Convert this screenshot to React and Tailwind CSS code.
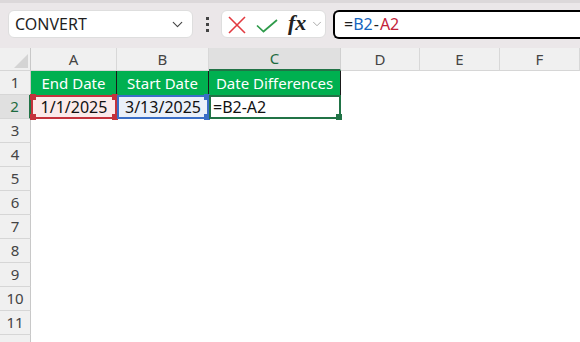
import { ChevronDown } from 'lucide-react';

const cols = [
  { key: 'A', w: 'w-[86px]' },
  { key: 'B', w: 'w-[92px]' },
  { key: 'C', w: 'w-[132px]' },
  { key: 'D', w: 'w-[79px]' },
  { key: 'E', w: 'w-[80px]' },
  { key: 'F', w: 'w-[80px]' },
];

const Handle = ({ pos, color }) => (
  <span className={`absolute w-[6px] h-[6px] ${pos} ${color}`} />
);

const Toolbar = () => (
  <div className="h-[48px] bg-[#ebe7e9] border-t-[3px] border-[#dcd8da] flex items-center pl-[8px] pt-[4px] pb-[7px]">
    <div className="w-[185px] h-[28px] bg-white border border-[#dedede] rounded-[6px] flex items-center justify-between pl-[6px] pr-[6px]">
      <span className="text-[16px] text-[#1f1f1f]">CONVERT</span>
      <ChevronDown size={17} strokeWidth={1.6} className="text-[#444]" />
    </div>
    <div className="w-[28px] flex flex-col items-center gap-[3px]">
      <span className="w-[3px] h-[3px] bg-[#444]" />
      <span className="w-[3px] h-[3px] bg-[#444]" />
      <span className="w-[3px] h-[3px] bg-[#444]" />
    </div>
    <div className="w-[105px] h-[28px] bg-white border border-[#dedede] rounded-[6px] flex items-center pl-[6px]">
      <svg width="18" height="18" viewBox="0 0 18 18" className="mt-[1px]">
        <path d="M1 1 L17 17 M17 1 L1 17" stroke="#e23a40" strokeWidth="1.6" fill="none" />
      </svg>
      <svg width="22" height="14" viewBox="0 0 22 14" className="ml-[10px] mt-[3px]">
        <path d="M1 6.5 L7.5 12.5 L21 1" stroke="#2f9b4b" strokeWidth="1.7" fill="none" />
      </svg>
      <span className="ml-[10px] text-[22px] italic font-semibold text-[#222] leading-none -mt-[2px]" style={{ fontFamily: '"Liberation Serif", serif' }}>fx</span>
      <ChevronDown size={14} strokeWidth={1.4} className="text-[#999] ml-[4px]" />
    </div>
    <div className="ml-[7px] flex-1 h-[29px] bg-white border-2 border-black border-r-0 rounded-l-[6px] flex items-center pl-[9px] text-[16px]">
      <span className="text-[#1f1f1f]">=</span>
      <span className="text-[#1565c0]">B2</span>
      <span className="text-[#1f1f1f] mx-[1px]">-</span>
      <span className="text-[#c2223a]">A2</span>
    </div>
  </div>
);

const HeaderRow = () => (
  <div className="flex h-[23px]">
    <div className="w-[31px] bg-[#f0f0f0] border-r border-[#c8c8c8] border-b border-b-[#d6d6d6] relative">
      <span className="absolute right-[2px] bottom-[2px] w-0 h-0 border-l-[14px] border-l-transparent border-b-[14px] border-b-[#d4d4d4]" />
    </div>
    {cols.map((c) =>
      c.key === 'C' ? (
        <div key={c.key} className={`${c.w} bg-[#e0e0e0] border-r border-[#d0d0d0] border-b-2 border-b-[#217346] flex items-center justify-center text-[15px] text-[#1d6b3f]`}>
          {c.key}
        </div>
      ) : (
        <div key={c.key} className={`${c.w} bg-[#f0f0f0] border-r border-[#d8d8d8] border-b border-b-[#d6d6d6] flex items-center justify-center text-[15px] text-[#444]`}>
          {c.key}
        </div>
      )
    )}
  </div>
);

const RowHead = ({ n, active }) =>
  active ? (
    <div className="w-[31px] h-[24px] bg-[#e0e0e0] border-r-2 border-[#217346] border-b border-b-[#d6d6d6] flex items-center justify-center text-[15px] text-[#1d6b3f]">
      {n}
    </div>
  ) : (
    <div className="w-[31px] h-[24px] bg-[#f0f0f0] border-r border-[#c8c8c8] border-b border-b-[#d6d6d6] flex items-center justify-center text-[15px] text-[#444]">
      {n}
    </div>
  );

const App = () => {
  return (
    <div className="w-[580px] h-[342px] overflow-hidden bg-white" style={{ fontFamily: '"Noto Sans", "Open Sans", sans-serif' }}>
      <Toolbar />
      <HeaderRow />
      {/* row 1 */}
      <div className="flex h-[24px]">
        <RowHead n={1} />
        <div className="w-[86px] bg-[#00b050] border-r border-[#1a1a1a] flex items-center justify-center text-white text-[15px]">End Date</div>
        <div className="w-[92px] bg-[#00b050] border-r border-[#1a1a1a] flex items-center justify-center text-white text-[15px]">Start Date</div>
        <div className="w-[132px] bg-[#00b050] border-r border-[#1a1a1a] flex items-center justify-center text-white text-[15px]">Date Differences</div>
      </div>
      {/* row 2 */}
      <div className="flex h-[24px]">
        <RowHead n={2} active />
        <div className="w-[86px] relative bg-[#fbeaea] border-2 border-[#c4323c] flex items-center justify-center text-[16px] text-[#111]">
          1/1/2025
          <Handle pos="-left-[3px] -top-[3px]" color="bg-[#c4323c]" />
          <Handle pos="-right-[3px] -top-[3px]" color="bg-[#c4323c]" />
          <Handle pos="-left-[3px] -bottom-[3px]" color="bg-[#c4323c]" />
          <Handle pos="-right-[3px] -bottom-[3px]" color="bg-[#c4323c]" />
        </div>
        <div className="w-[92px] relative bg-[#eaf0f9] border-2 border-[#3a6ec6] flex items-center justify-center text-[16px] text-[#111]">
          3/13/2025
          <Handle pos="-right-[3px] -top-[3px]" color="bg-[#3a6ec6]" />
          <Handle pos="-right-[3px] -bottom-[3px]" color="bg-[#3a6ec6]" />
        </div>
        <div className="w-[132px] relative bg-white border-2 border-[#217346] flex items-center pl-[2px] text-[16px] text-[#111]">
          =B2-A2
          <Handle pos="-right-[3px] -bottom-[3px]" color="bg-[#217346]" />
        </div>
      </div>
      {[3, 4, 5, 6, 7, 8, 9, 10, 11].map((n) => (
        <div key={n} className="flex h-[24px]">
          <RowHead n={n} />
        </div>
      ))}
      <div className="flex h-[24px]">
        <div className="w-[31px] h-[24px] bg-[#f0f0f0] border-r border-[#c8c8c8]" />
      </div>
    </div>
  );
};

export default App;
